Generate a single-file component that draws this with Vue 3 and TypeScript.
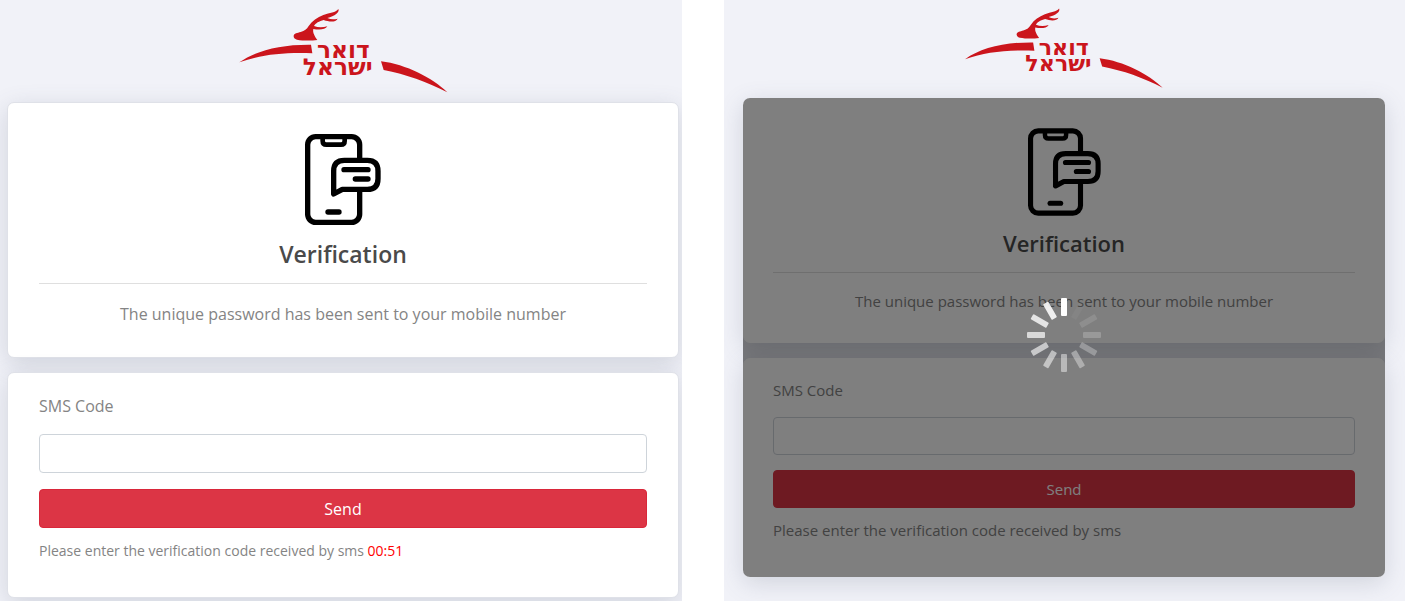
<script setup lang="ts">
import { ref } from 'vue'

interface Step {
  id: string
  loading: boolean
  hint: string
  timer: string
}

const steps: Step[] = [
  { id: 'entry', loading: false, hint: 'Please enter the verification code received by sms', timer: '00:51' },
  { id: 'sending', loading: true, hint: 'Please enter the verification code received by sms', timer: '' },
]

const codes = ref<Record<string, string>>({ entry: '', sending: '' })

const blades = Array.from({ length: 12 }, (_, i) => ({
  angle: i * 30,
  opacity: i === 0 ? 1 : 0.04 + (i - 1) * 0.083,
}))
</script>

<template>
  <main class="page">
    <section v-for="step in steps" :key="step.id" class="panel" :class="{ compact: step.loading }">
      <header class="brand">
        <svg class="logo" viewBox="0 0 681 300" role="img" aria-label="דואר ישראל">
          <g fill="#cb151c">
            <path d="M28 187 C78 152 150 133 243 134 L247 160 C160 157 94 164 28 187 Z" />
            <path d="M453 184 C528 193 608 234 652 277 C590 245 528 223 461 210 Z" />
            <path
              d="M191 107 C192 100 202 99 212 96 C224 93 230 88 236 78 C246 63 262 52 280 45 C300 38 316 38 325 27 C330 37 314 49 292 54 C302 59 312 59 323 56 C318 66 300 67 281 60 C268 63 256 70 252 78 C264 83 278 83 292 79 C286 90 266 90 250 87 C247 98 255 110 262 120 C240 123 218 122 201 119 C194 117 190 112 191 107 Z"
            />
            <text class="logo-text" text-anchor="middle">
              <tspan x="340" y="174">דואר</tspan>
              <tspan x="323" y="224">ישראל</tspan>
            </text>
          </g>
        </svg>
      </header>

      <div class="cards">
        <div class="card intro">
          <svg class="phone" viewBox="46 27 228 273" aria-hidden="true">
            <g fill="none" stroke="#000" stroke-width="16" stroke-linecap="round" stroke-linejoin="round">
              <rect x="54" y="35" width="156" height="257" rx="24" />
              <path d="M99 37 V48 Q99 59 110 59 H154 Q165 59 165 48 V37" stroke-width="14" />
              <path d="M115 261 H148" />
              <path
                fill="#fff"
                d="M132 207 V138 Q132 106 164 106 H233 Q265 106 265 138 V161 Q265 193 233 193 H158 Z"
              />
              <path d="M163 134 H235 M197 162 H235" />
            </g>
          </svg>
          <h1>Verification</h1>
          <hr />
          <p class="lead">The unique password has been sent to your mobile number</p>
        </div>

        <form class="card form" @submit.prevent>
          <label :for="`code-${step.id}`">SMS Code</label>
          <input :id="`code-${step.id}`" v-model="codes[step.id]" type="text" inputmode="numeric" autocomplete="one-time-code" />
          <button type="submit">Send</button>
          <p class="hint">{{ step.hint }} <span v-if="step.timer" class="timer">{{ step.timer }}</span></p>
        </form>

        <div v-if="step.loading" class="overlay">
          <svg class="spinner" viewBox="-37 -37 74 74" role="img" aria-label="Loading">
            <rect
              v-for="blade in blades"
              :key="blade.angle"
              x="-3"
              y="-37"
              width="6"
              height="18"
              rx="1"
              fill="#fff"
              :opacity="blade.opacity"
              :transform="`rotate(${blade.angle})`"
            />
          </svg>
        </div>
      </div>
    </section>
  </main>
</template>

<style>
body {
  margin: 0;
  background: #fff;
}
</style>

<style scoped>
* {
  box-sizing: border-box;
}

.page {
  display: grid;
  grid-template-columns: 682fr 681fr;
  gap: 42px;
  min-height: 100vh;
  overflow: hidden;
  font-family: 'Segoe UI', 'Open Sans', 'Noto Sans', sans-serif;
  font-size: 16px;
  line-height: 24px;
  color: #848484;
}

.panel {
  padding: 0 3px 3px 7px;
  background: #f1f2f8;
  overflow: hidden;
}

.brand {
  display: flex;
  justify-content: center;
  height: 102px;
}

.logo {
  width: 227px;
  height: 100px;
}

.logo-text {
  font-family: 'DejaVu Sans', sans-serif;
  font-size: 70px;
  font-weight: 700;
}

.cards {
  position: relative;
  display: flex;
  flex-direction: column;
  gap: 14px;
}

.card {
  display: flex;
  flex-direction: column;
  border: 1px solid #dfe1e8;
  border-radius: 7px;
  background: #fff;
  box-shadow: 0 6px 24px rgba(80, 90, 115, 0.2);
}

.intro {
  align-items: center;
  padding: 31px;
}

.phone {
  width: 76px;
  height: 91px;
}

h1 {
  margin: 9px 0 0;
  font-size: 23px;
  font-weight: 600;
  line-height: 40px;
  color: #4a4a4a;
}

hr {
  width: 100%;
  height: 1px;
  margin: 9px 0 18px;
  border: 0;
  background: #dfdfdf;
}

p {
  margin: 0;
}

.form {
  padding: 21px 31px 34px;
}

input {
  width: 100%;
  height: 39px;
  margin: 16px 0;
  padding: 6px 12px;
  border: 1px solid #ced4da;
  border-radius: 4px;
  background: #fff;
  font: inherit;
  color: #495057;
}

button {
  height: 39px;
  padding: 0 12px;
  border: 1px solid #d9273a;
  border-radius: 4px;
  background: #dc3545;
  font: inherit;
  color: #fff;
}

.hint {
  margin-top: 11px;
  font-size: 14px;
}

.timer {
  color: #ff0000;
}

.compact {
  padding: 0 20px 24px 19px;
  font-size: 15px;
}

.compact .brand {
  height: 98px;
}

.compact .logo {
  width: 216px;
  height: 95px;
}

.compact .card {
  border-color: #fff;
}

.compact .cards {
  gap: 15px;
}

.compact .intro {
  padding: 29px;
}

.compact .phone {
  width: 73px;
  height: 88px;
}

.compact h1 {
  margin-top: 8px;
  font-size: 22px;
  line-height: 38px;
}

.compact hr {
  margin: 10px 0 16px;
}

.compact .form {
  padding: 19px 29px 34px;
}

.compact input {
  height: 38px;
  margin: 15px 0;
}

.compact button {
  height: 38px;
  border-color: #dc3545;
}

.compact .hint {
  margin-top: 10px;
  font-size: 15px;
}

.overlay {
  position: absolute;
  inset: 0;
  display: flex;
  align-items: center;
  justify-content: center;
  padding-bottom: 5px;
  border-radius: 7px;
  background: rgba(0, 0, 0, 0.5);
}

.spinner {
  width: 74px;
  height: 74px;
}
</style>
